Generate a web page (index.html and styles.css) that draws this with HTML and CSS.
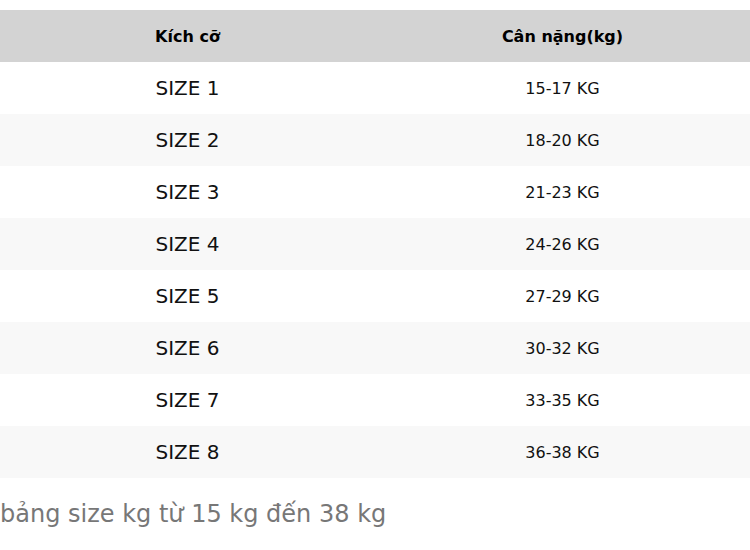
FILE: index.html
```html
<!DOCTYPE html>
<html lang="vi">
<head>
<meta charset="utf-8">
<link rel="stylesheet" href="styles.css">
</head>
<body>
<table class="size-table">
  <thead>
    <tr><th>Kích cỡ</th><th>Cân nặng(kg)</th></tr>
  </thead>
  <tbody>
    <tr><td class="size">SIZE 1</td><td class="kg">15-17 KG</td></tr>
    <tr><td class="size">SIZE 2</td><td class="kg">18-20 KG</td></tr>
    <tr><td class="size">SIZE 3</td><td class="kg">21-23 KG</td></tr>
    <tr><td class="size">SIZE 4</td><td class="kg">24-26 KG</td></tr>
    <tr><td class="size">SIZE 5</td><td class="kg">27-29 KG</td></tr>
    <tr><td class="size">SIZE 6</td><td class="kg">30-32 KG</td></tr>
    <tr><td class="size">SIZE 7</td><td class="kg">33-35 KG</td></tr>
    <tr><td class="size">SIZE 8</td><td class="kg">36-38 KG</td></tr>
  </tbody>
</table>
<p class="caption">bảng size kg từ 15 kg đến 38 kg</p>
</body>
</html>
```
FILE: styles.css
```css
html, body {
  margin: 0;
  padding: 0;
  background: #ffffff;
  font-family: "DejaVu Sans", sans-serif;
  color: #111;
}
body {
  padding-top: 10px;
}
.size-table {
  width: 750px;
  border-collapse: collapse;
  table-layout: fixed;
}
.size-table th {
  background: #d3d3d3;
  height: 52px;
  padding: 0;
  font-size: 16px;
  font-weight: bold;
  text-align: center;
  color: #000;
}
.size-table td {
  height: 52px;
  padding: 0;
  text-align: center;
}
.size-table tbody tr:nth-child(even) td {
  background: #f8f8f8;
}
.size {
  font-size: 20px;
}
.kg {
  font-size: 16px;
}
.caption {
  margin: 0;
  padding-top: 22px;
  font-size: 24px;
  line-height: 28px;
  color: #777777;
}
```
